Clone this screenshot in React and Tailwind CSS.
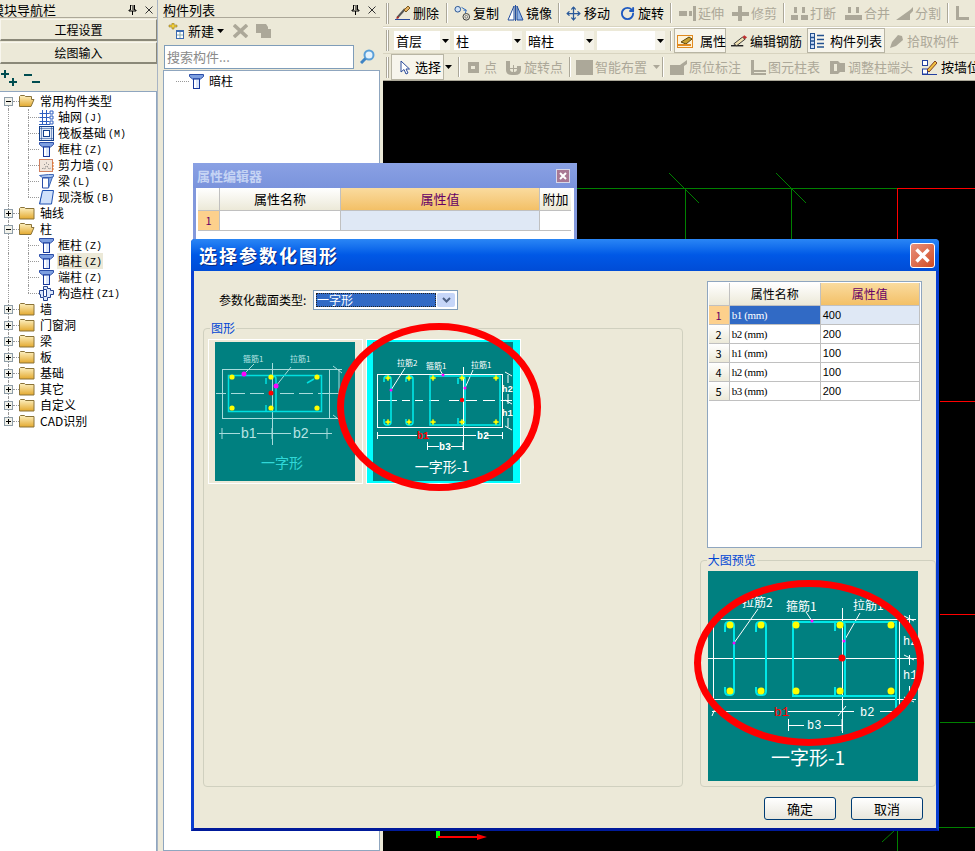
import { Move, RotateCw } from "lucide-react";

const GRAY = "#aca899";

function Caret({ color = "#000", className = "" }) {
  return (
    <svg width="7" height="4" viewBox="0 0 7 4" className={className}>
      <path d="M0 0h7L3.5 4z" fill={color} />
    </svg>
  );
}

function ColumnIcon() {
  return (
    <svg width="15" height="16" viewBox="0 0 15 16" className="shrink-0">
      <path d="M.5 1.5h14v2l-3 2.5h-8l-3-2.5z" fill="#7d9fe0" stroke="#2a4da8" />
      <rect x="4.5" y="6" width="6" height="9.5" fill="#dbe7fb" stroke="#17389a" />
      <rect x="5" y="7" width="2" height="8" fill="#fff" />
    </svg>
  );
}

function GridIcon() {
  return (
    <svg width="15" height="15" viewBox="0 0 15 15" className="shrink-0">
      <path d="M3.5 0v15M7.5 0v15M.5 3.5h10M.5 7.5h10M.5 11.5h10M0 14.5h11" stroke="#2f5fc0" strokeWidth="1" fill="none" />
      <path d="M11 1h3v3h-3zM11 6h3v3h-3zM11 11h3v3h-3z" fill="none" stroke="#2f5fc0" />
    </svg>
  );
}

function RaftIcon() {
  return (
    <svg width="15" height="15" viewBox="0 0 15 15" className="shrink-0">
      <rect x=".5" y=".5" width="14" height="14" fill="#dfe9f8" stroke="#123f8c" />
      <rect x="4.5" y="4.5" width="6" height="6" fill="#fff" stroke="#123f8c" />
      <path d="M.5 2.5h14M.5 12.5h14M2.5 .5v14M12.5 .5v14" stroke="#123f8c" strokeDasharray="1 1" />
    </svg>
  );
}

function WallIcon() {
  return (
    <svg width="15" height="15" viewBox="0 0 15 15" className="shrink-0">
      <rect x=".5" y="1.5" width="13" height="12" fill="#f1e6dc" stroke="#d08060" />
      <path d="M3 11l1-1 2 1 1-3 2 1 1 2 2-1M5 7l1-1M9 6l1 1M7 5l1 0" stroke="#777" strokeDasharray="1 1" fill="none" />
      <path d="M14 4v8" stroke="#e07020" strokeDasharray="2 1" />
    </svg>
  );
}

function BeamIcon() {
  return (
    <svg width="15" height="16" viewBox="0 0 15 16" className="shrink-0">
      <path d="M.5 2.5l9-1h5v2l-2 1h-9z" fill="#a9c4ef" stroke="#3f68b8" />
      <path d="M3.5 5h6v10h-6z" fill="#fff" stroke="#2a4da8" />
      <path d="M9.5 5l4-1-4 11z" fill="#86a9e4" stroke="#3f68b8" />
    </svg>
  );
}

function SlabIcon() {
  return (
    <svg width="15" height="15" viewBox="0 0 15 15" className="shrink-0">
      <path d="M3.5 .5h11l-2 13.5H.5z" fill="#cfe0fa" stroke="#1d4fb0" />
      <path d="M.5 14l3-13.5v0L1 14z" fill="#1d4fb0" />
    </svg>
  );
}

function CustomColumnIcon() {
  return (
    <svg width="15" height="16" viewBox="0 0 15 16" className="shrink-0">
      <path d="M4.5 1.5h4v2h3v2h3v4h-3v3h-3v3h-4v-3h-3v-3h-1v-4h4z" fill="#dbe7fb" stroke="#23418f" />
      <path d="M4.5 4.5h3v7h-3z" fill="#fff" stroke="#23418f" />
    </svg>
  );
}

function FolderIcon({ open }) {
  return (
    <svg width="16" height="14" viewBox="0 0 16 14" className="shrink-0">
      <defs>
        <linearGradient id="folderFill" x1="0" y1="0" x2="0" y2="1">
          <stop offset="0" stopColor="#fdf0c0" />
          <stop offset="1" stopColor="#e3a92f" />
        </linearGradient>
      </defs>
      {open ? (
        <path d="M.5 12.5v-10l1-1h4l1 1h6v3h2.500l-3 7z" fill="url(#folderFill)" stroke="#8a7338" />
      ) : (
        <path d="M.5 13V2.500l1-1h4l1 1h8.500v10.500z" fill="url(#folderFill)" stroke="#8a7338" />
      )}
    </svg>
  );
}

function Expander({ open }) {
  return (
    <svg width="9" height="9" viewBox="0 0 9 9" className="shrink-0 relative z-10">
      <rect x=".5" y=".5" width="8" height="8" fill="#f2f2ea" stroke="#8e9da8" />
      <path d={open ? "M2 4.500h5" : "M2 4.500h5M4.500 2v5"} stroke="#000" />
    </svg>
  );
}

const treeRows = [
  { label: "常用构件类型", open: true },
  { label: "轴网", code: "(J)", icon: <GridIcon /> },
  { label: "筏板基础", code: "(M)", icon: <RaftIcon /> },
  { label: "框柱", code: "(Z)", icon: <ColumnIcon /> },
  { label: "剪力墙", code: "(Q)", icon: <WallIcon /> },
  { label: "梁", code: "(L)", icon: <BeamIcon /> },
  { label: "现浇板", code: "(B)", icon: <SlabIcon />, last: true },
  { label: "轴线" },
  { label: "柱", open: true },
  { label: "框柱", code: "(Z)", icon: <ColumnIcon /> },
  { label: "暗柱", code: "(Z)", icon: <ColumnIcon />, selected: true },
  { label: "端柱", code: "(Z)", icon: <ColumnIcon /> },
  { label: "构造柱", code: "(Z1)", icon: <CustomColumnIcon />, last: true },
  { label: "墙" },
  { label: "门窗洞" },
  { label: "梁" },
  { label: "板" },
  { label: "基础" },
  { label: "其它" },
  { label: "自定义" },
  { label: "CAD识别", end: true },
];

function TreeRow({ row, index }) {
  const isChild = !!row.icon;
  return (
    <div className="relative flex h-4 items-center text-[12px] leading-4 text-black">
      {!row.end && index > 0 && <span className="absolute left-[8px] top-0 h-full border-l border-dotted border-[#999]" />}
      {index === 0 && <span className="absolute left-[8px] top-2 h-2 border-l border-dotted border-[#999]" />}
      {row.end && <span className="absolute left-[8px] top-0 h-2 border-l border-dotted border-[#999]" />}
      {isChild ? (
        <>
          <span className={row.last ? "absolute left-[28px] top-0 h-2 border-l border-dotted border-[#999]" : "absolute left-[28px] top-0 h-full border-l border-dotted border-[#999]"} />
          <span className="ml-[28px] w-[11px] border-t border-dotted border-[#999]" />
          {row.icon}
          <span className={row.selected ? "ml-[3px] flex h-4 items-center bg-[#ece9d8] px-[1px] pr-[1px]" : "ml-[3px] flex h-4 items-center px-[1px]"}>
            {row.label}
            <span className="ml-[2px] mt-[4px] font-['Liberation_Mono',monospace] text-[10px] leading-[14px]">{row.code}</span>
          </span>
        </>
      ) : (
        <>
          <span className="ml-[4px] flex">
            <Expander open={row.open} />
          </span>
          <span className="w-[6px] border-t border-dotted border-[#999]" />
          <FolderIcon open={row.open} />
          <span className="ml-[5px]">{row.label}</span>
        </>
      )}
    </div>
  );
}

function PaneHeader({ title, titleClass }) {
  return (
    <div className="flex h-[15px] items-center justify-between border-b border-[#aca899] bg-[#ece9d8] pr-[4px] text-[13px] leading-[14px]">
      <span className={titleClass}>{title}</span>
      <span className="flex items-center gap-[8px]">
        <svg width="9" height="10" viewBox="0 0 9 10">
          <path d="M2.500 0h4v5h1.500v1h-7V5h1.500zM4.500 6v4" stroke="#000" fill="none" />
          <path d="M5 1v4" stroke="#000" />
        </svg>
        <svg width="8" height="8" viewBox="0 0 8 8">
          <path d="M.5 .5l7 7M7.500 .5l-7 7" stroke="#333" />
        </svg>
      </span>
    </div>
  );
}

function NavButton({ label }) {
  return (
    <div className="flex h-[22px] items-center justify-center border border-b-2 border-[#f8f6ee] border-r-[#8a8878] border-b-[#8a8878] bg-[#ece9d8] text-[12px] text-black">
      {label}
    </div>
  );
}

function Sep({ className = "" }) {
  return <span className={"h-[20px] w-[2px] shrink-0 border-l border-r border-l-[#aca899] border-r-white " + className} />;
}

function Grip() {
  return <span className="ml-[3px] h-[21px] w-[3px] shrink-0 border-l border-r border-l-[#aca899] border-r-[#aca899] bg-white" />;
}

function ToolItem({ icon, text, cls, off, pressed }) {
  let look = "flex h-full shrink-0 items-center gap-[2px] whitespace-nowrap pl-[1px] text-[13px] ";
  if (pressed) look += "h-[24px] border border-[#b8b5a4] bg-[#f7f5ec] ";
  return (
    <div className={look + cls} style={off ? { color: GRAY } : { color: "#000" }}>
      <span className="flex w-[17px] shrink-0 justify-center">{icon}</span>
      {text && <span>{text}</span>}
    </div>
  );
}

const G = ({ d, w = 17, h = 15, fill = GRAY }) => (
  <svg width={w} height={h} viewBox="0 0 17 15">
    <path d={d} fill={fill} />
  </svg>
);

function BrushIcon() {
  return (
    <svg width="17" height="16" viewBox="0 0 17 16">
      <path d="M1 14.500h15" stroke="#2a4a9a" />
      <path d="M3 13l8-9" stroke="#555" strokeWidth="2" />
      <path d="M10 5l4-4 2 2-4 4z" fill="#e4b060" stroke="#7a5a20" />
      <path d="M2 14l3-1-1-2z" fill="#c02020" />
    </svg>
  );
}

function CopyIcon() {
  return (
    <svg width="18" height="17" viewBox="0 0 18 17">
      <circle cx="4" cy="4" r="3" fill="#cfe0f5" stroke="#23518f" />
      <circle cx="13" cy="12" r="3.500" fill="none" stroke="#333" />
      <circle cx="13" cy="12" r="1.500" fill="none" stroke="#777" />
      <path d="M8 2l5 3M13 5l-3 0M13 5l-1 3" stroke="#2a6ac0" fill="none" />
    </svg>
  );
}

function MirrorIcon() {
  return (
    <svg width="17" height="16" viewBox="0 0 17 16">
      <path d="M7 1L1 15h6z" fill="#fff" stroke="#234f9e" />
      <path d="M10 1l6 14h-6z" fill="#8fb4e8" stroke="#234f9e" />
      <path d="M8.500 0v16" stroke="#234f9e" />
    </svg>
  );
}

function ListIcon() {
  return (
    <svg width="15" height="16" viewBox="0 0 15 16">
      <rect x=".5" y=".5" width="4" height="15" fill="#cfe0fa" stroke="#23518f" />
      <path d="M.5 4.500h4M.5 8h4M.5 11.500h4M7 2.500h7M7 6.500h7M7 10.500h7M7 14h7" stroke="#23518f" strokeWidth="1.500" />
    </svg>
  );
}

function PropIcon() {
  return (
    <svg width="17" height="15" viewBox="0 0 17 15">
      <rect x=".5" y="2.500" width="15" height="12" fill="#fff3d8" stroke="#e08a20" />
      <path d="M4 9l8-5 3 2-6 5z" fill="#c8a030" stroke="#5a4510" />
      <path d="M1 12h13" stroke="#e08a20" strokeWidth="2" />
    </svg>
  );
}

function EditBarIcon() {
  return (
    <svg width="18" height="14" viewBox="0 0 18 14">
      <path d="M0 12h13" stroke="#222" strokeWidth="1.500" />
      <path d="M3 10l9-7 3 2-9 7z" fill="#f0e0b0" stroke="#333" />
      <path d="M12 3l2-2 3 2-2 2z" fill="#c03030" />
    </svg>
  );
}

function Toolbars() {
  return (
    <div className="flex h-[81px] shrink-0 flex-col border-b border-[#aca899] bg-[#ece9d8]">
      <div className="flex h-[27px] items-center overflow-hidden border-b border-[#d8d4c0]">
        <Grip />
        <ToolItem cls="ml-[4px] w-[53px]" text="删除" icon={<BrushIcon />} />
        <Sep />
        <ToolItem cls="ml-[5px] w-[53px]" text="复制" icon={<CopyIcon />} />
        <ToolItem cls="w-[52px]" text="镜像" icon={<MirrorIcon />} />
        <Sep />
        <ToolItem cls="ml-[4px] w-[54px]" text="移动" icon={<Move size={15} color="#2a5a9a" strokeWidth={2} />} />
        <ToolItem cls="w-[52px]" text="旋转" icon={<RotateCw size={15} color="#1f5ac0" strokeWidth={3} />} />
        <Sep />
        <ToolItem off cls="ml-[6px] w-[53px]" text="延伸" icon={<G d="M0 5h8v5H0zM10 5h3v5h-3zM14 0h3v15h-3z" />} />
        <ToolItem off cls="w-[52px]" text="修剪" icon={<G d="M0 6h17v4H0zM6 0h4v15H6z" />} />
        <Sep />
        <ToolItem off cls="ml-[5px] w-[54px]" text="打断" icon={<G d="M0 9h7v5H0zM10 9h7v5h-7zM3 1h3v6H3zM11 1h3v6h-3z" />} />
        <ToolItem off cls="w-[51px]" text="合并" icon={<G d="M0 9h17v5H0zM3 1h3v6H3zM11 1h3v6h-3z" />} />
        <ToolItem off cls="w-[52px]" text="分割" icon={<G d="M0 14L14 4l3-3v4l-3 3v6z" />} />
        <Sep />
        <ToolItem off cls="ml-[4px] w-[24px]" icon={<G d="M2 0h3v11h10v3H2z" />} />
      </div>
      <div className="flex h-[27px] items-center overflow-hidden border-b border-[#d8d4c0] border-t border-t-white">
        <Grip />
        <Combo cls="ml-[5px] w-[56px]" text="首层" />
        <Combo cls="ml-[4px] w-[68px]" text="柱" />
        <Combo cls="ml-[4px] w-[68px]" text="暗柱" />
        <Combo cls="ml-[3px] w-[68px]" text="" />
        <Sep className="ml-[5px]" />
        <ToolItem pressed cls="ml-[2px] w-[52px] gap-[6px] pl-[2px]" text="属性" icon={<PropIcon />} />
        <ToolItem cls="ml-[4px] w-[77px]" text="编辑钢筋" icon={<EditBarIcon />} />
        <ToolItem pressed cls="w-[78px] gap-[4px]" text="构件列表" icon={<ListIcon />} />
        <ToolItem off cls="w-[77px] pl-[3px]" text="拾取构件" icon={<G d="M2 15l2-6 6-7 4 1 1 4-7 6z" />} />
      </div>
      <div className="flex h-[26px] items-center overflow-hidden">
        <Grip />
        <ToolItem pressed cls="ml-[2px] w-[53px] gap-[2px] pl-[4px]" text="选择" icon={
          <svg width="10" height="15" viewBox="0 0 10 15">
            <path d="M1 1v11l3-2.500 2 4.500 2-1-2-4h3.500z" fill="#fff" stroke="#2a4a9a" />
          </svg>
        } />
        <span className="flex w-[8px] shrink-0 justify-center"><Caret /></span>
        <Sep className="ml-[6px]" />
        <ToolItem off cls="ml-[4px] w-[40px]" text="点" icon={<G d="M3 2h11v11H3zM6 6v3h4V6z" />} />
        <ToolItem off cls="w-[65px]" text="旋转点" icon={<G d="M1 1h4v8q0 3 3 3h1q3 0 3-3V6l4 0v4q0 5-6 5H7q-6 0-6-5zM8 5h1v3h3v1H9v3H8V9H5V8h3z" />} />
        <Sep />
        <ToolItem off cls="ml-[4px] w-[75px]" text="智能布置" icon={<G d="M0 0h17v15H0z" />} />
        <span className="flex w-[12px] shrink-0 justify-center"><Caret color={GRAY} /></span>
        <Sep />
        <ToolItem off cls="ml-[5px] w-[79px]" text="原位标注" icon={<G d="M0 5h10l7-5v4l-3 2v9H0z" />} />
        <ToolItem off cls="w-[80px]" text="图元柱表" icon={<G d="M2 0h3v10h12v2H5v1h12v2H2z" />} />
        <ToolItem off cls="w-[92px]" text="调整柱端头" icon={<G d="M1 1h8l2 2h5v9h-5l-2 2H1zM5 4v7h3V4z" />} />
        <ToolItem cls="w-[60px] gap-[3px]" text="按墙位" icon={
          <svg width="15" height="16" viewBox="0 0 15 16">
            <rect x=".5" y="1.500" width="5" height="5" fill="#fff" stroke="#2340a0" />
            <rect x=".5" y="10" width="5" height="5" fill="#fff" stroke="#2340a0" />
            <path d="M0 15.500h15" stroke="#2340a0" />
            <path d="M5 11l8-9 2 2-8 9z" fill="#f0c040" stroke="#804020" />
          </svg>
        } />
      </div>
    </div>
  );
}

function Combo({ cls, text }) {
  return (
    <div className={"flex h-[19px] shrink-0 items-center justify-between bg-white text-[13px] leading-[19px] text-black " + cls}>
      <span className="pl-[2px]">{text}</span>
      <span className="flex h-full w-[10px] items-center justify-center bg-[#f4f2e8]">
        <Caret />
      </span>
    </div>
  );
}

function Canvas() {
  return (
    <div className="flex-1 overflow-hidden bg-black">
      <svg width="592" height="770" viewBox="383 81 592 770" className="block" shapeRendering="crispEdges">
        <g stroke="#008000" fill="none">
          <path d="M577 188.500h320M685.500 188v60M791.500 188v60" strokeWidth="1" />
          <path d="M669 173l30 30M776 173l30 30" shapeRendering="auto" />
          <path d="M940 722.500h35M940 827.500h35M897.500 828v23M830 827.500h110" />
          <path d="M882 842l12-11" shapeRendering="auto" />
        </g>
        <g stroke="#f00" fill="none">
          <path d="M897 188.500h78M897.500 188v60M940 401.500h35M940 614.500h35" />
        </g>
        <rect x="436" y="831" width="4" height="7" fill="#0f0" />
        <path d="M438 836h39v-2l10 3-10 3v-2h-39z" fill="#f00" shapeRendering="auto" />
      </svg>
    </div>
  );
}

function PropertyEditor() {
  return (
    <div className="absolute left-[193px] top-[163px] h-[90px] w-[384px] rounded-t-[2px] border-[3px] border-t-[2px] border-[#8298dc] bg-white">
      <div className="-mx-[3px] -mt-[2px] flex h-[25px] items-center justify-between bg-linear-to-b from-[#8aa1e4] to-[#7a93dc] px-[7px] pl-[4px]">
        <span className="text-[13px] font-bold text-[#c6d4f4]">属性编辑器</span>
        <span className="flex h-[14px] w-[14px] items-center justify-center border border-[#d8d8e8] bg-[#a87894]">
          <svg width="8" height="8" viewBox="0 0 8 8">
            <path d="M1 1l6 6M7 1L1 7" stroke="#fff" strokeWidth="2" />
          </svg>
        </span>
      </div>
      <div className="ml-[2px] grid w-fit grid-cols-[21px_120px_198px_31px] grid-rows-[22px_19px] gap-px bg-[#c0c0c0] pb-px text-[13px] text-black">
        <HeadCell />
        <HeadCell>属性名称</HeadCell>
        <HeadCell active>属性值</HeadCell>
        <HeadCell>附加</HeadCell>
        <div className="flex items-center justify-center bg-[#fdd08c] text-[11px] text-[#660066]">1</div>
        <div className="bg-white" />
        <div className="bg-[#dfe8f5]" />
        <div className="bg-white" />
      </div>
    </div>
  );
}

function HeadCell({ children, active }) {
  return (
    <div
      className={
        active
          ? "flex items-center justify-center bg-linear-to-b from-[#fadb9e] to-[#f3c066] text-[#660066]"
          : "flex items-center justify-center bg-linear-to-b from-white to-[#ece9d8]"
      }
    >
      {children}
    </div>
  );
}

function Thumb1() {
  return (
    <svg width="140" height="139" viewBox="0 0 140 139" className="block bg-[#008080]">
      <g stroke="#a8dcdc" fill="none">
        <rect x="7.500" y="27.500" width="107" height="49" />
        <path d="M1 51.500h10M16 51.500h14M35 51.500h14M65 51.500h14M84 51.500h14M103 51.500h25" />
        <path d="M57.500 21v82" />
        <path d="M4 91.500h21M42 91.500h34M95 91.500h22M7 86l0 11M57 86v11M112 86v11" />
        <path d="M115 27.500h12M115 76.500h12M124 27v50M118 24l9 7M118 73l9 7" />
        <path d="M29 32l10-10M61 44l15-19" />
      </g>
      <rect x="13.500" y="33.500" width="93" height="36" fill="none" stroke="#00e0e0" strokeWidth="1.500" />
      <path d="M61 69V37q0-3-3-3h-3M51 42v-6M51 69v-6M92 41l7-4" stroke="#00e0e0" strokeWidth="1.500" fill="none" />
      {[[17, 35], [56, 35], [102, 35], [17, 66], [56, 66], [102, 66]].map(([x, y]) => (
        <circle key={x + "-" + y} cx={x} cy={y} r="2.600" fill="#ff0" />
      ))}
      <circle cx="29" cy="32" r="2.500" fill="#f0f" />
      <circle cx="61" cy="44" r="2.500" fill="#f0f" />
      <circle cx="56" cy="51" r="2.500" fill="#f00" />
      <g fill="#b8e4e4" fontSize="8">
        <text x="28" y="20">箍筋1</text>
        <text x="75" y="20">拉筋1</text>
        <text x="26" y="96" fontSize="14" fontFamily="Liberation Sans">b1</text>
        <text x="78" y="96" fontSize="14" fontFamily="Liberation Sans">b2</text>
      </g>
      <text x="67" y="126" textAnchor="middle" fontSize="14" fill="#30d8d8">一字形</text>
    </svg>
  );
}

function Thumb2() {
  const stars = [15, 36, 60, 89, 123];
  return (
    <svg width="140" height="139" viewBox="0 0 140 139" className="block bg-[#008080]">
      <g stroke="#fff" fill="none">
        <rect x="4.500" y="32.500" width="125" height="53" />
        <path d="M4 58.500h20M29 58.500h8M42 58.500h8M56 58.500h10M76 58.500h10M92 58.500h12M110 58.500h12M127 58.500h12" />
        <path d="M90.500 25v83" />
        <path d="M4 93.500h40M53 93.500h50M112 93.500h18M4.500 90v7M129.500 90v7M54 104.500h12M78 104.500h12M54.500 100v8M90 100v8" />
        <path d="M132 30l7 4M132 58l7 4M132 84l7 4M135 33v8M135 52v10M135 76v9" />
        <path d="M18 48l14-22M70 33l-3-5M92 46l8-18" />
      </g>
      <g stroke="#00f0f0" strokeWidth="1.500" fill="none">
        <rect x="57" y="34" width="70" height="49" />
        <path d="M92 83V37q0-3-3-3M85 42v-6M85 82v-6" />
        <path d="M11 40v-3q0-3 3-3h1q3 0 3 3v43q0 3-3 3h-1q-3 0-3-3v-3" />
        <path d="M33 40v-3q0-3 3-3h1q3 0 3 3v43q0 3-3 3h-1q-3 0-3-3v-3" />
      </g>
      {stars.map((x) => (
        <g key={x} fill="#ff0">
          <circle cx={x} cy="36" r="1.800" />
          <circle cx={x} cy="80" r="1.800" />
          <path d={`M${x - 3} 35.500h6v1h-6zM${x - 0.5} 33h1v6h-1zM${x - 3} 79.500h6v1h-6zM${x - 0.5} 77h1v6h-1z`} />
        </g>
      ))}
      <circle cx="18" cy="48" r="1.500" fill="#f0f" />
      <circle cx="70" cy="33" r="1.500" fill="#f0f" />
      <circle cx="92" cy="46" r="1.500" fill="#f0f" />
      <circle cx="89" cy="58" r="2.200" fill="#f00" />
      <g fill="#fff" fontSize="8">
        <text x="24" y="24">拉筋2</text>
        <text x="53" y="27">箍筋1</text>
        <text x="98" y="26">拉筋1</text>
        <g fontSize="10" fontFamily="Liberation Mono" fontWeight="bold">
          <text x="104" y="97">b2</text>
          <text x="66" y="108">b3</text>
        </g>
        <g fontSize="9" fontFamily="Liberation Mono" fontWeight="bold">
          <text x="129" y="50">h2</text>
          <text x="129" y="74">h1</text>
        </g>
      </g>
      <text x="44" y="97" fontSize="10" fill="#f00" fontFamily="Liberation Mono" fontWeight="bold">b1</text>
      <text x="69" y="130" textAnchor="middle" fontSize="14" fill="#fff">一字形-1</text>
    </svg>
  );
}

function Preview() {
  const xs = [22, 53, 88, 132, 183];
  return (
    <svg width="210" height="210" viewBox="0 0 210 210" className="ml-[7px] mt-[4px] block bg-[#008080]">
      <g stroke="#fff" fill="none">
        <path d="M5 48.500h203M5 128.500h203M5.500 48v80M191.500 48v90M0 87.500h210M134.500 37v125" />
        <path d="M4 140.500h62M80 140.500h66M172 140.500h20M4 145l4-10M130 145l8-10M188 145l8-10" />
        <path d="M80 154.500h16M116 154.500h18M80.500 148v12M134 148v12" />
        <path d="M201.500 44v10M201.500 84v10M201.500 115v16M196 45l10 5M196 84l10 5M196 126l10 5" />
        <path d="M26 72l24-34M104 50l-6-9M136 70l16-28" />
      </g>
      <g stroke="#00e8e8" strokeWidth="2" fill="none">
        <rect x="85" y="51" width="103" height="74" />
        <path d="M188 125v12" />
        <path d="M137 125V55q0-4-4-4h-2M127 60v-8M127 124v-8" />
        <path d="M17 61v-6q0-4 4-4h1q4 0 4 4v65q0 4-4 4h-1q-4 0-4-4v-4" />
        <path d="M48 61v-6q0-4 4-4h2q4 0 4 4v65q0 4-4 4h-2q-4 0-4-4v-4" />
      </g>
      {xs.map((x) => (
        <g key={x} fill="#ff0">
          <circle cx={x} cy="54" r="3.500" />
          <circle cx={x} cy="120" r="3.500" />
        </g>
      ))}
      <circle cx="26" cy="72" r="1.500" fill="#f0f" />
      <circle cx="104" cy="50" r="1.500" fill="#f0f" />
      <circle cx="136" cy="70" r="1.500" fill="#f0f" />
      <circle cx="134" cy="87" r="3.500" fill="#f00" />
      <g fill="#fff" fontSize="12">
        <text x="34" y="36">拉筋2</text>
        <text x="78" y="40">箍筋1</text>
        <text x="145" y="39">拉筋1</text>
        <g fontSize="12" fontFamily="Liberation Mono">
          <text x="152" y="145">b2</text>
          <text x="99" y="158">b3</text>
          <text x="195" y="74">h2</text>
          <text x="195" y="108">h1</text>
        </g>
      </g>
      <text x="66" y="145" fontSize="13" fill="#f00" fontFamily="Liberation Mono">b1</text>
      <text x="100" y="194" textAnchor="middle" fontSize="19" fill="#fff">一字形-1</text>
    </svg>
  );
}

const paramRows = [
  { no: 1, name: "b1 (mm)", value: "400", selected: true },
  { no: 2, name: "b2 (mm)", value: "200" },
  { no: 3, name: "h1 (mm)", value: "100" },
  { no: 4, name: "h2 (mm)", value: "100" },
  { no: 5, name: "b3 (mm)", value: "200" },
];

function ParamTable() {
  return (
    <div className="ml-[7px] mt-[10px] h-[267px] w-[215px] border border-[#8fa6bf] bg-white pl-px pt-px">
      <div className="grid w-fit grid-cols-[20px_90px_98px] grid-rows-[22px_repeat(5,18px)] gap-px bg-[#c0c0c0] pb-px pr-px text-[12px]">
        <HeadCell />
        <HeadCell>属性名称</HeadCell>
        <HeadCell active>属性值</HeadCell>
        {paramRows.map((r) => (
          <div key={r.no} className="contents">
            <div className={r.selected ? "flex items-center justify-center bg-[#fdd08c] text-[11px] text-[#660066]" : "flex items-center justify-center bg-linear-to-b from-white to-[#ece9d8] text-[11px] text-black"}>
              {r.no}
            </div>
            <div className={r.selected ? "flex items-center bg-[#316ac5] pl-[2px] font-['Liberation_Serif',serif] text-[11px] tracking-[-0.4px] text-white" : "flex items-center bg-white pl-[2px] font-['Liberation_Serif',serif] text-[11px] tracking-[-0.4px] text-black"}>
              {r.name}
            </div>
            <div className={r.selected ? "flex items-center bg-[#dfe8f5] pl-[2px] font-['Liberation_Sans',sans-serif] text-[11px] text-black" : "flex items-center bg-white pl-[2px] font-['Liberation_Sans',sans-serif] text-[11px] text-black"}>
              {r.value}
            </div>
          </div>
        ))}
      </div>
    </div>
  );
}

function DialogButton({ children }) {
  return (
    <button className="h-[23px] w-[72px] rounded-[3px] border border-[#003c74] bg-linear-to-b from-white to-[#e8e6dc] text-[13px] text-black">
      {children}
    </button>
  );
}

function ParamDialog() {
  return (
    <div className="absolute left-[191px] top-[239px] flex h-[592px] w-[748px] flex-col rounded-t-[4px] border-[3px] border-t-0 border-[#0a3ed0] border-b-[#001a9a] bg-[#ece9d8]">
      <div className="-mx-[3px] flex h-[32px] shrink-0 items-center justify-between rounded-t-[4px] bg-linear-to-b from-[#2a86f5] via-[#0058e6] to-[#004cd6] pl-[8px] pr-[4px]">
        <span className="text-[18px] font-bold leading-none tracking-[2px] text-white [text-shadow:1px_1px_#0a2a80]">选择参数化图形</span>
        <span className="flex h-[25px] w-[25px] items-center justify-center rounded-[3px] border border-white bg-linear-to-br from-[#e8907a] to-[#d04a1e]">
          <svg width="17" height="17" viewBox="0 0 17 17">
            <path d="M2.500 2.500l12 12M14.500 2.500l-12 12" stroke="#fff" strokeWidth="3.500" />
          </svg>
        </span>
      </div>
      <div className="flex h-[516px] shrink-0">
        <div className="ml-[9px] w-[481px]">
          <div className="ml-[16px] mt-[19px] flex h-[20px] items-center">
            <span className="w-[94px] whitespace-nowrap text-[12px] text-black">参数化截面类型:</span>
            <div className="flex h-[20px] w-[145px] items-center border border-[#7f9db9] bg-white p-[2px]">
              <span className="flex h-full flex-1 items-center border border-dotted border-[#222] bg-[#316ac5] text-[12px] leading-none text-white">一字形</span>
              <span className="ml-[1px] flex h-full w-[18px] items-center justify-center rounded-[2px] bg-[#c6d6f8]">
                <svg width="9" height="6" viewBox="0 0 9 6">
                  <path d="M1 1l3.500 3.500L8 1" stroke="#4d6185" strokeWidth="2" fill="none" />
                </svg>
              </span>
            </div>
          </div>
          <fieldset className="mt-[11px] h-[466px] rounded-[4px] border border-[#d0d0bf]">
            <legend className="ml-[6px] px-[1px] text-[12px] leading-[14px] text-[#0046d5]">图形</legend>
            <div className="ml-[4px] mt-[4px] flex gap-[3px]">
              <div className="w-[155px] border border-white bg-[#ece9d8] px-[6px] pb-[2px] pt-[2px]">
                <Thumb1 />
              </div>
              <div className="w-[155px] border border-white bg-[#00ffff] px-[6px] pb-[2px] pt-[2px]">
                <Thumb2 />
              </div>
            </div>
          </fieldset>
        </div>
        <div className="ml-[17px] w-[237px]">
          <ParamTable />
          <fieldset className="mt-[5px] h-[234px] rounded-[4px] border border-[#d0d0bf]">
            <legend className="ml-[6px] px-[1px] text-[12px] leading-[14px] text-[#0046d5]">大图预览</legend>
            <Preview />
          </fieldset>
        </div>
      </div>
      <div className="mt-[10px] flex justify-end gap-[15px] pr-[13px]">
        <DialogButton>确定</DialogButton>
        <DialogButton>取消</DialogButton>
      </div>
    </div>
  );
}

function App() {
  return (
    <div className="relative flex h-[851px] w-[975px] overflow-hidden bg-[#ece9d8] font-['Noto_Sans_CJK_SC',sans-serif] text-black">
      <div className="flex w-[157px] shrink-0 flex-col pt-[3px]">
        <PaneHeader title="模块导航栏" titleClass="-ml-[9px] whitespace-nowrap" />
        <div className="mt-px">
          <NavButton label="工程设置" />
        </div>
        <div className="mt-px">
          <NavButton label="绘图输入" />
        </div>
        <div className="flex h-[27px] items-center gap-[7px] pl-px">
          <svg width="16" height="16" viewBox="0 0 16 16">
            <path d="M0 4h8M4 0v8M8 12h8M12 8v8" stroke="#004d50" strokeWidth="2" />
          </svg>
          <svg width="16" height="12" viewBox="0 0 16 12">
            <path d="M0 3h8M8 10h8" stroke="#004d50" strokeWidth="2" />
          </svg>
        </div>
        <div className="flex-1 border-r border-t border-[#8fa6bf] bg-white pt-px">
          {treeRows.map((row, i) => (
            <TreeRow key={i} row={row} index={i} />
          ))}
        </div>
      </div>
      <div className="w-[6px] shrink-0 border-l border-[#a8b4c4]" />
      <div className="flex w-[217px] shrink-0 flex-col pt-[3px]">
        <PaneHeader title="构件列表" titleClass="whitespace-nowrap" />
        <div className="flex h-[26px] items-center pl-[5px] text-[13px]">
          <svg width="16" height="16" viewBox="0 0 16 16">
            <path d="M1 2h3V0h2v2h3v2H6v2H4V4H1z" fill="#f0d040" stroke="#806010" strokeWidth=".5" />
            <rect x="8.500" y="7.500" width="7" height="8" fill="#fff" stroke="#3a6ab0" />
            <path d="M8 7h8v2H8z" fill="#3a6ab0" />
            <path d="M9 12h6M12 9v6" stroke="#8aa" />
          </svg>
          <span className="ml-[4px]">新建</span>
          <Caret className="ml-[3px]" />
          <svg width="15" height="14" viewBox="0 0 15 14" className="ml-[9px]">
            <path d="M1 1l13 12M14 1L1 13" stroke={GRAY} strokeWidth="3.500" />
          </svg>
          <svg width="16" height="14" viewBox="0 0 16 14" className="ml-[8px]">
            <path d="M0 0h10l2 3v2h-1v0h4v9H5v-5H0z" fill={GRAY} />
          </svg>
        </div>
        <div className="flex h-[25px] items-center pl-px">
          <div className="flex h-[24px] w-[190px] items-center border border-[#7f9db9] bg-white pl-[2px] text-[13px] text-[#8a8a8a]">搜索构件...</div>
          <span className="flex w-[26px] justify-center">
            <svg width="15" height="15" viewBox="0 0 15 15">
              <circle cx="9" cy="6" r="4.500" fill="#e4f2fc" stroke="#5a9fd8" strokeWidth="2" />
              <path d="M5.500 9.500L1 14" stroke="#3f84c4" strokeWidth="3" />
            </svg>
          </span>
        </div>
        <div className="mt-px flex-1 border border-[#8fa6bf] bg-white">
          <div className="mt-[2px] flex h-4 items-center pl-[12px] text-[12px] leading-4">
            <span className="w-[13px] border-t border-dotted border-[#999]" />
            <ColumnIcon />
            <span className="ml-[5px]">暗柱</span>
          </div>
        </div>
      </div>
      <div className="flex flex-1 flex-col overflow-hidden pl-[3px]">
        <Toolbars />
        <Canvas />
      </div>
      <PropertyEditor />
      <ParamDialog />
      <svg width="975" height="851" viewBox="0 0 975 851" className="pointer-events-none absolute left-0 top-0">
        <ellipse cx="439" cy="407" rx="98.500" ry="80.500" fill="none" stroke="#f00" strokeWidth="7" />
        <ellipse cx="809" cy="663" rx="111.500" ry="79.500" fill="none" stroke="#f00" strokeWidth="7" />
      </svg>
    </div>
  );
}

export default App;
